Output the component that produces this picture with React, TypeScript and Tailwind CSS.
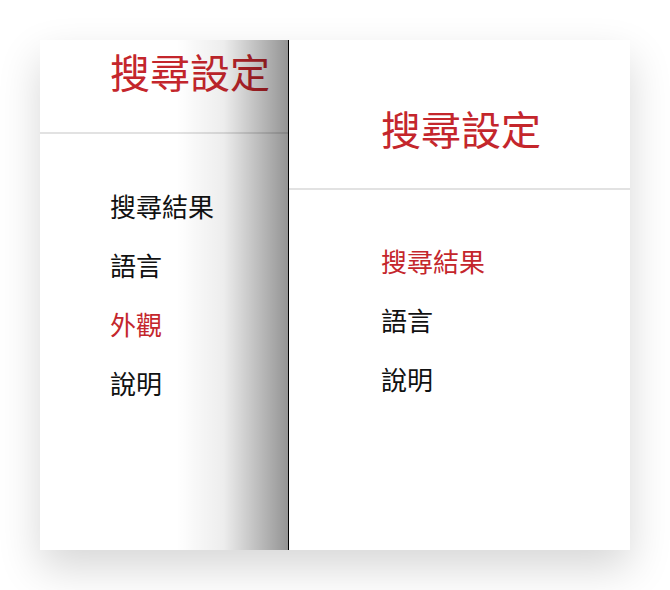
const font = { fontFamily: '"Noto Sans CJK TC", "Noto Sans", sans-serif' }

const leftItems = [
  { label: "搜尋結果", active: false },
  { label: "語言", active: false },
  { label: "外觀", active: true },
  { label: "說明", active: false },
]

const rightItems = [
  { label: "搜尋結果", active: true },
  { label: "語言", active: false },
  { label: "說明", active: false },
]

function Menu({ items, className }: { items: { label: string; active: boolean }[]; className: string }) {
  return (
    <ul className={"flex flex-col gap-[33px] " + className}>
      {items.map((it) => (
        <li
          key={it.label}
          className={"text-[26px] leading-[26px] " + (it.active ? "text-[#c4262c]" : "text-[#111]")}
        >
          {it.label}
        </li>
      ))}
    </ul>
  )
}

export default function App() {
  return (
    <div className="w-[670px] h-[590px] bg-white pt-[40px] pl-[40px]" style={font}>
      <div className="flex w-[590px] h-[510px] bg-white shadow-[0_18px_40px_rgba(0,0,0,0.16)]">
        {/* previous page sliding out */}
        <div className="relative w-[249px] h-full border-r border-black overflow-hidden">
          <div className="h-[94px] border-b-2 border-[#e2e2e2] pl-[70px] pt-[11px]">
            <h1 className="text-[40px] leading-[40px] text-[#c4262c]">搜尋設定</h1>
          </div>
          <Menu items={leftItems} className="pl-[70px] pt-[59px]" />
          <div className="absolute inset-0 bg-[linear-gradient(to_right,rgba(0,0,0,0)_55%,rgba(0,0,0,0.07)_74%,rgba(0,0,0,0.42)_100%)]" />
        </div>

        {/* current page */}
        <div className="flex-1 h-full">
          <div className="h-[150px] border-b-2 border-[#e2e2e2] pl-[92px] pt-[68px]">
            <h1 className="text-[40px] leading-[40px] text-[#c4262c]">搜尋設定</h1>
          </div>
          <Menu items={rightItems} className="pl-[92px] pt-[58px]" />
        </div>
      </div>
    </div>
  )
}
